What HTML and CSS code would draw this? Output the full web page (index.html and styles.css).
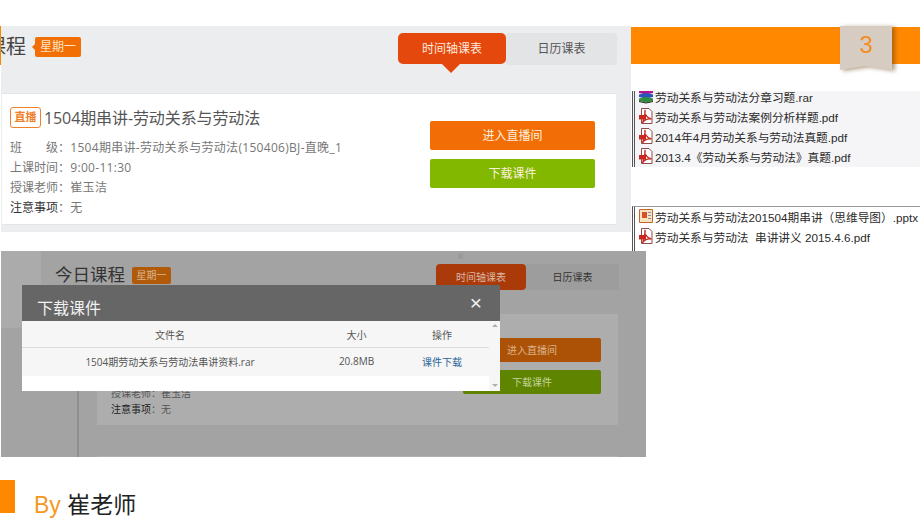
FILE: index.html
```html
<!DOCTYPE html>
<html lang="zh-CN">
  <head>
    <meta charset="utf-8">
    <title>3 - 下载课件</title>
    <link rel="stylesheet" href="styles.css">
  </head>
  <body>
    <svg class="defs" width="0" height="0">
      <symbol id="pdf" viewBox="0 0 16 16">
        <path d="M3.500 .5h7.500l3 3v12H3.500z" fill="#fff" stroke="#8f4a4a"/>
        <path d="M1 7h7v4.500H1z" fill="#c8281e"/>
        <path d="M7 2c-1 4 2 8 6.500 9-4-.5-7 .5-9 4 1-3 3-8 2.500-13z" fill="none" stroke="#c8281e" stroke-width="1.400"/>
      </symbol>
      <symbol id="rar" viewBox="0 0 16 16">
        <path d="M1 2.500 8 1l7 1.500v2.500l-7 1.500-7-1.500z" fill="#b0178c"/>
        <path d="M1 6.500 8 5l7 1.500v2.500l-7 1.500-7-1.500z" fill="#2a56b8"/>
        <path d="M1 10.500 8 9l7 1.500v2.500l-7 1.500-7-1.500z" fill="#2f8f3c"/>
        <path d="M1 13.500l7 1.500 7-1.500" fill="none" stroke="#222"/>
      </symbol>
      <symbol id="ppt" viewBox="0 0 16 16">
        <path d="M1.500 1.500h13v13h-13z" fill="#f6e3c0" stroke="#c8642a"/>
        <path d="M4 4h5v6H4z" fill="#d8502a"/>
        <path d="M10 4h3v1h-3zM10 7h3v1h-3zM10 10h3v1h-3z" fill="#7a8fb0"/>
      </symbol>
    </svg>

    <div class="slide">

      <!-- top left shot -->
      <div class="today-edge"></div>
      <section class="shot today">
        <div class="today-head">
          <div class="head-left">
            <span class="head-title">课程</span>
            <span class="weekday">星期一</span>
          </div>
          <div class="tabs">
            <span class="tab tab-on">时间轴课表</span>
            <span class="tab">日历课表</span>
          </div>
        </div>
        <div class="course">
          <div class="course-info">
            <h3 class="course-title"><span class="live">直播</span>1504期串讲-劳动关系与劳动法</h3>
            <p class="row"><span class="row-key spread"><span>班</span><span>级</span></span>：1504期串讲-劳动关系与劳动法(150406)BJ-直晚_1</p>
            <p class="row"><span class="row-key">上课时间</span>：9:00-11:30</p>
            <p class="row"><span class="row-key">授课老师</span>：崔玉洁</p>
            <p class="row"><span class="row-key dark">注意事项</span>：无</p>
          </div>
          <div class="course-btns">
            <span class="btn btn-orange">进入直播间</span>
            <span class="btn btn-green">下载课件</span>
          </div>
        </div>
      </section>

      <!-- orange banner with page mark -->
      <div class="banner"></div>
      <div class="page-mark">
        <div class="page-mark-in">3</div>
      </div>

      <!-- file lists -->
      <div class="shot files files-a">
        <div class="file"><svg class="ico"><use href="#rar"/></svg>劳动关系与劳动法分章习题.rar</div>
        <div class="file"><svg class="ico"><use href="#pdf"/></svg>劳动关系与劳动法案例分析样题.pdf</div>
        <div class="file"><svg class="ico"><use href="#pdf"/></svg>2014年4月劳动关系与劳动法真题.pdf</div>
        <div class="file"><svg class="ico"><use href="#pdf"/></svg>2013.4《劳动关系与劳动法》真题.pdf</div>
      </div>
      <div class="shot files files-b">
        <div class="file"><svg class="ico"><use href="#ppt"/></svg>劳动关系与劳动法201504期串讲（思维导图）.pptx</div>
        <div class="file"><svg class="ico"><use href="#pdf"/></svg>劳动关系与劳动法&nbsp; 串讲讲义 2015.4.6.pdf</div>
      </div>

      <!-- dimmed page behind the dialog -->
      <section class="shot dim">
        <div class="dim-side"></div>
        <div class="dim-line"></div>
        <div class="dim-dot"></div>
        <span class="dim-title">今日课程</span>
        <span class="dim-weekday">星期一</span>
        <span class="dim-tab dim-tab-on">时间轴课表</span>
        <span class="dim-tab dim-tab-off">日历课表</span>
        <div class="dim-card">
          <p class="dim-row">授课老师：崔玉洁</p>
          <p class="dim-row"><b>注意事项</b>：无</p>
        </div>
        <span class="dim-btn dim-btn-orange">进入直播间</span>
        <span class="dim-btn dim-btn-green">下载课件</span>
      </section>

      <!-- dialog -->
      <div class="dialog">
        <div class="dialog-head">
          <span>下载课件</span>
          <span class="dialog-x">×</span>
        </div>
        <div class="dialog-body">
          <div class="table">
            <div class="tr th">
              <span class="c-name">文件名</span>
              <span class="c-size">大小</span>
              <span class="c-op">操作</span>
            </div>
            <div class="tr td">
              <span class="c-name">1504期劳动关系与劳动法串讲资料.rar</span>
              <span class="c-size">20.8MB</span>
              <span class="c-op link">课件下载</span>
            </div>
          </div>
          <div class="scrollbar">
            <span class="arrow-up"></span>
            <span class="arrow-down"></span>
          </div>
        </div>
      </div>

      <!-- footer -->
      <div class="foot-mark"></div>
      <div class="foot-text"><span class="by">By</span> 崔老师</div>
    </div>
  </body>
</html>
```

FILE: styles.css
```css
* {
  box-sizing: border-box;
}
body {
  margin: 0;
  background-color: #fff;
  font-family: "Open Sans", "Noto Sans CJK SC", sans-serif;
  overflow: hidden;
}
p,
h3 {
  margin: 0;
  font-weight: normal;
}
.defs {
  position: absolute;
}
.slide {
  position: relative;
  width: 920px;
  height: 518px;
  overflow: hidden;
}
.shot {
  position: absolute;
}

/* top left */
.today-edge {
  position: absolute;
  left: 0;
  top: 26px;
  width: 1px;
  height: 39px;
  background-color: #f58a00;
}
.today {
  left: 1px;
  top: 26px;
  width: 630px;
  height: 206px;
  padding-top: 7px;
  background-color: #ebedef;
  display: flex;
  flex-direction: column;
  overflow: hidden;
}
.today-head {
  height: 60px;
  display: flex;
  justify-content: space-between;
  align-items: flex-start;
  padding-right: 14px;
}
.head-left {
  display: flex;
  align-items: center;
  gap: 9px;
  height: 26px;
  margin-left: -15px;
  padding-top: 1px;
}
.head-title {
  font-size: 20px;
  line-height: 26px;
  color: #444;
  white-space: nowrap;
}
.weekday {
  position: relative;
  width: 46px;
  height: 20px;
  border-radius: 2px;
  background-color: #f26f05;
  color: #fde3c8;
  font-size: 12px;
  line-height: 20px;
  text-align: center;
}
.weekday::before {
  content: "";
  position: absolute;
  left: -3px;
  top: 7px;
  border: 3px solid transparent;
  border-left: 0;
  border-right-color: #f26f05;
}
.tabs {
  display: flex;
}
.tab {
  position: relative;
  width: 111px;
  height: 32px;
  border-radius: 0 4px 4px 0;
  background-color: #e3e4e6;
  color: #555;
  font-size: 12px;
  line-height: 31px;
  text-align: center;
}
.tab-on {
  width: 108px;
  height: 31px;
  border-radius: 5px;
  background-color: #e4480c;
  color: #fde8df;
}
.tab-on::after {
  content: "";
  position: absolute;
  left: 44px;
  top: 31px;
  border: 9px solid transparent;
  border-top-color: #e4480c;
  border-bottom: 0;
}
.course {
  width: 614px;
  height: 132px;
  margin-left: 1px;
  padding: 12px 21px 0 8px;
  background-color: #fff;
  border-top: 1px solid #e4e5e7;
  border-bottom: 1px solid #e4e5e7;
  display: flex;
  justify-content: space-between;
}
.course-title {
  display: flex;
  align-items: center;
  gap: 3px;
  height: 22px;
  margin-bottom: 10px;
  font-size: 16px;
  color: #555;
  letter-spacing: -.1px;
}
.live {
  width: 31px;
  height: 21px;
  border: 1.5px solid #f0802a;
  border-radius: 3px;
  color: #f0802a;
  font-size: 11px;
  line-height: 18px;
  font-weight: bold;
  text-align: center;
  letter-spacing: 0;
}
.row {
  display: flex;
  height: 20px;
  font-size: 12px;
  line-height: 20px;
  color: #777;
  letter-spacing: .3px;
}
.row-key {
  width: 48px;
  white-space: nowrap;
  letter-spacing: 0;
}
.spread {
  display: flex;
  justify-content: space-between;
}
.dark {
  color: #333;
}
.course-btns {
  display: flex;
  flex-direction: column;
  gap: 9px;
  padding-top: 15px;
}
.btn {
  width: 165px;
  height: 29px;
  border-radius: 2px;
  color: #fdf0df;
  font-size: 12px;
  line-height: 29px;
  text-align: center;
}
.btn-orange {
  background-color: #f26d05;
}
.btn-green {
  background-color: #82b800;
}

/* banner */
.banner {
  position: absolute;
  left: 631px;
  top: 27px;
  width: 289px;
  height: 37px;
  background-color: #ff8800;
}
.page-mark {
  position: absolute;
  left: 840px;
  top: 26px;
  filter: drop-shadow(3px 1px 2px rgba(110, 70, 20, .55));
}
.page-mark-in {
  width: 52px;
  height: 44px;
  padding-top: 3px;
  background-color: #d6ccc2;
  color: #f58a1e;
  font-family: "Liberation Sans", sans-serif;
  font-size: 24px;
  line-height: 32px;
  text-align: center;
  clip-path: polygon(0 0, 100% 0, 100% 100%, 50% 91%, 0 100%);
}

/* explorer lists */
.files {
  left: 632px;
  width: 288px;
  border-left: 3px double #555;
  font-family: "Liberation Sans", "Noto Sans CJK SC", sans-serif;
  font-size: 11.7px;
  color: #2a2a2a;
  white-space: nowrap;
  overflow: hidden;
}
.files-a {
  top: 91px;
  height: 76px;
  background-color: #f5f5f7;
}
.files-b {
  top: 206px;
  height: 49px;
  background-color: #fff;
  border-top: 1px solid #9a9a9a;
}
.file {
  display: flex;
  align-items: center;
  height: 20px;
}
.ico {
  flex: none;
  width: 16px;
  height: 16px;
  margin: 0 1px 0 3px;
}
.files-a .file:first-child {
  margin-top: -5px;
}
.files-b .file:first-child {
  margin-top: -1px;
}

/* dimmed shot */
.dim {
  left: 1px;
  top: 251px;
  width: 645px;
  height: 206px;
  background-color: #a3a3a3;
}
.dim::after {
  content: "";
  position: absolute;
  left: 96px;
  top: 205px;
  width: 521px;
  height: 1px;
  background-color: #b0b0b0;
}
.dim-side {
  position: absolute;
  left: 0;
  top: 0;
  width: 40px;
  height: 77px;
  background-color: #ababab;
}
.dim-line {
  position: absolute;
  left: 76px;
  top: 77px;
  width: 2px;
  height: 129px;
  background-color: #8e8e8e;
}
.dim-dot {
  position: absolute;
  left: 457px;
  top: 3px;
  width: 5px;
  height: 5px;
  background-color: #999;
}
.dim-title {
  position: absolute;
  left: 54px;
  top: 11px;
  font-size: 17.500px;
  line-height: 24px;
  color: #333;
}
.dim-weekday {
  position: absolute;
  left: 131px;
  top: 16px;
  width: 39px;
  height: 17px;
  border-radius: 2px;
  background-color: #b15a0a;
  color: #d9b48e;
  font-size: 10px;
  line-height: 17px;
  text-align: center;
}
.dim-tab {
  position: absolute;
  top: 13px;
  height: 26px;
  font-size: 10px;
  line-height: 26px;
  text-align: center;
}
.dim-tab-on {
  left: 435px;
  width: 90px;
  border-radius: 4px;
  background-color: #ab3a0a;
  color: #d9b9a8;
}
.dim-tab-off {
  left: 525px;
  width: 93px;
  background-color: #9d9d9d;
  color: #333;
}
.dim-card {
  position: absolute;
  left: 96px;
  top: 63px;
  width: 521px;
  height: 111px;
  padding: 71px 0 0 14px;
  background-color: #adadad;
}
.dim-row {
  height: 16px;
  font-size: 10px;
  line-height: 16px;
  color: #555;
}
.dim-row b {
  font-weight: normal;
  color: #222;
}
.dim-btn {
  position: absolute;
  left: 462px;
  width: 138px;
  height: 24px;
  border-radius: 2px;
  font-size: 10px;
  line-height: 24px;
  text-align: center;
}
.dim-btn-orange {
  top: 87px;
  background-color: #ac5206;
  color: #dcb48c;
}
.dim-btn-green {
  top: 119px;
  background-color: #5f8400;
  color: #c4d69c;
}

/* dialog */
.dialog {
  position: absolute;
  left: 22px;
  top: 285px;
  width: 478px;
  height: 106px;
  display: flex;
  flex-direction: column;
}
.dialog-head {
  height: 36px;
  padding: 12px 18px 0 15px;
  background-color: #666;
  color: #f2f2f2;
  font-size: 16px;
  line-height: 22px;
  display: flex;
  justify-content: space-between;
}
.dialog-x {
  margin-top: -7px;
  font-family: "Liberation Sans", sans-serif;
  font-size: 21px;
  line-height: 26px;
  color: #f2f2f2;
}
.dialog-body {
  flex: 1;
  display: flex;
  background-color: #fff;
}
.table {
  flex: 1;
}
.tr {
  display: flex;
  align-items: center;
  background-color: #f6f6f6;
  font-size: 10px;
  color: #555;
  text-align: center;
}
.th {
  height: 27px;
  border-bottom: 1px solid #dcdcdc;
}
.td {
  height: 28px;
  padding-bottom: 2px;
}
.c-name {
  width: 296px;
}
.c-size {
  width: 77px;
}
.c-op {
  width: 94px;
}
.link {
  color: #2a6496;
}
.scrollbar {
  position: relative;
  width: 13px;
  background-color: #f6f6f6;
}
.arrow-up,
.arrow-down {
  position: absolute;
  left: 3px;
  border: 3px solid transparent;
}
.arrow-up {
  top: 3px;
  border-top: 0;
  border-bottom-color: #b0b0b0;
}
.arrow-down {
  bottom: 4px;
  border-bottom: 0;
  border-top-color: #b0b0b0;
}

/* footer */
.foot-mark {
  position: absolute;
  left: 0;
  top: 480px;
  width: 15px;
  height: 33px;
  background-color: #ff8800;
}
.foot-text {
  position: absolute;
  left: 34px;
  top: 489px;
  font-family: "Liberation Sans", "Noto Sans CJK SC", sans-serif;
  font-size: 23px;
  line-height: 32px;
  color: #222;
}
.by {
  color: #f39a1e;
}
```
